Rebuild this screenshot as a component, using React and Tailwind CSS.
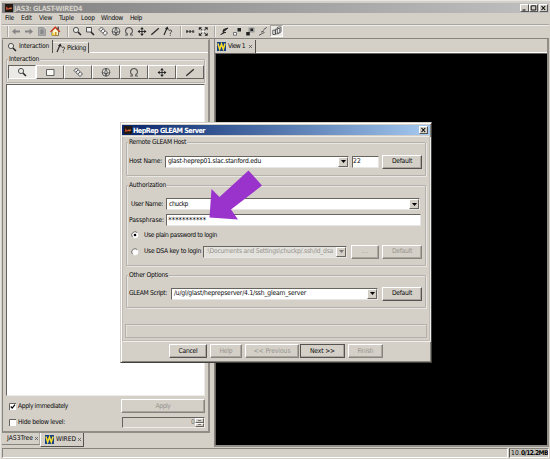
import { useLayoutEffect, useRef } from "react";
import clsx from "clsx";

// Label whose tracking is adjusted so the text spans `w` pixels.
function T({ w, children, className }) {
  const ref = useRef(null);
  useLayoutEffect(() => {
    const el = ref.current;
    el.style.letterSpacing = "0px";
    const natural = el.getBoundingClientRect().width;
    el.style.letterSpacing = `${(w - natural) / el.textContent.length}px`;
  }, [w, children]);
  return (
    <span ref={ref} className={clsx("inline-block shrink-0 whitespace-pre", className)}>
      {children}
    </span>
  );
}

const GLYPHS = {
  back: <path d="M2 6.5 5.5 3.5V5.6H10V7.4H5.5V9.5Z" fill="#858585" />,
  forward: <path d="M10 6.5 6.5 3.5V5.6H2V7.4H6.5V9.5Z" fill="#858585" />,
  reload: (
    <>
      <path d="M2.5 2.5H7.5L9.5 4.5V10.5H2.5Z" fill="#aaa" stroke="#999" />
      <path d="M4 6h4M4 8h4M6 4v5" stroke="#777" strokeWidth=".8" />
    </>
  ),
  home: (
    <>
      <path d="M3 6V10.5H9.5V6L6.3 3Z" fill="#fff8d0" stroke="#5c4a20" strokeWidth=".7" />
      <path d="M1.5 6.8 6.3 2 11 6.8" fill="none" stroke="#d42a10" strokeWidth="1.2" />
      <path d="M8.5 1.8h1.3v3H8.5z" fill="#333" />
      <path d="M5.8 7h1.8v3.5H5.8z" fill="#d79a20" />
      <path d="M3 8h1.8v2.6H3z" fill="#f0c838" />
    </>
  ),
  zoom: (
    <>
      <circle cx="5" cy="5" r="2.6" fill="#e9e9e5" stroke="#444" strokeWidth=".9" />
      <path d="m7 7 3 3" stroke="#222" strokeWidth="1.5" />
    </>
  ),
  zoomBox: (
    <>
      <path d="M2.5 2.5h5v4.5h-5z" fill="#eee" stroke="#444" strokeWidth=".9" />
      <path d="m7 7 3 3" stroke="#222" strokeWidth="1.5" />
    </>
  ),
  box: <path d="M2.5 3.5h7.5v6H2.5z" fill="#f8f8f4" stroke="#555" strokeWidth=".9" />,
  ruler: (
    <>
      <path d="M4.5 2 10.5 8 8 10.5 2 4.5Z" fill="#eee" stroke="#444" strokeWidth=".9" />
      <path d="m6 4-2 2M8 6 6 8" stroke="#333" strokeWidth=".8" />
    </>
  ),
  globe: (
    <g fill="none" stroke="#444" strokeWidth=".8">
      <circle cx="6" cy="6.3" r="3.9" fill="#e2e2dd" />
      <path d="M2 6.5q4 2.2 8 0M6 2.3q-2.5 4 0 8q2.4-4 0-8" />
    </g>
  ),
  rotate: (
    <path d="M2 10h2.3V8.8Q2.3 7.8 2.5 5.6Q3 2.5 6 2.5T9.5 5.6Q9.7 7.8 7.7 8.8V10H10" fill="none" stroke="#555" strokeWidth="1.1" />
  ),
  move: (
    <>
      <path d="M6 3v7M2.5 6.5h7" stroke="#222" strokeWidth=".9" />
      <path d="M6 2 7.8 4.3H4.2ZM6 11 4.2 8.7h3.6ZM1.5 6.5 3.8 4.7v3.6ZM10.5 6.5 8.2 4.7v3.6Z" fill="#222" />
    </>
  ),
  line: <path d="M2.3 9.8 9.8 3.2" stroke="#333" strokeWidth="1.4" />,
  pick: (
    <>
      <path d="M2 10 5 3M3.5 4 5.3 2.5 6.3 4.8" fill="none" stroke="#222" strokeWidth="1.1" />
      <path d="M7 6q0-1 1.3-1t1.3 1.2q0 1-1.3 1.8v.8M8.3 9.7v1" fill="none" stroke="#333" strokeWidth=".9" />
    </>
  ),
  dots: (
    <>
      <path d="M2 6.5h8" stroke="#555" strokeWidth=".8" />
      <path d="M2 5.3h2v2.4H2zM5.1 5.3h1.9v2.4H5.1zM8.2 5.3h2v2.4h-2z" fill="#444" />
    </>
  ),
  expand: (
    <>
      <path d="m3 3 6.5 7M9.5 3 3 10" stroke="#333" strokeWidth="1.1" />
      <path d="M1.8 2.2h3.2L1.8 5.2zM10.7 2.2H7.5l3.2 3zM1.8 10.8H5l-3.2-3zM10.7 10.8H7.5l3.2-3z" fill="#222" />
      <path d="M5 5.3h2.4v2.4H5z" fill="#fff" />
    </>
  ),
  stroke: <path d="M2.5 10 5 7.500H8M5.500 4.500 10 3 7.500 5.200 5 7Z" fill="#222" stroke="#222" strokeWidth=".9" />,
  pair: (
    <>
      <path d="M6.5 3h3.5v3.5H6.500z" fill="#222" />
      <path d="M2.5 7.5h3v2.7h-3z" fill="#fff" stroke="#555" strokeWidth=".8" />
    </>
  ),
  pair2: (
    <>
      <path d="M4.5 2.5h6v5h-6z" fill="#999" />
      <path d="M6.5 3.5H9v2.6H6.5zM2.2 7h3.6v3.6H2.2z" fill="#222" />
    </>
  ),
  steps: <path d="M2 10.3 4.5 9M4 7.2l3-1.4M4.5 8.7l3-1.2M6.5 4.8 9.7 2.4" fill="none" stroke="#555" strokeWidth="1" />,
  boxes: (
    <g fill="#eee" stroke="#444" strokeWidth=".8">
      <path d="M5.5 3.2 7 2h3v4.5L8.5 8" />
      <path d="M4.3 4.3h3v4.5h-3zM1.8 5.2h2.6v4.3H1.8z" />
      <path d="M6.3 3.5h2.5V8H6.3z" />
    </g>
  ),
};

const Icon = ({ name, className }) => (
  <svg viewBox="0 0 12 12" className={clsx("size-3 shrink-0", className)}>
    {GLYPHS[name]}
  </svg>
);

const WLogo = () => (
  <svg viewBox="0 0 9 9" className="size-[9px] shrink-0">
    <path d="M0 0h9v9H0z" fill="#123f86" />
    <path d="m.9 1.6 1.8 5.6L4.5 2l1.8 5.2 1.8-5.6" fill="none" stroke="#ffdf28" strokeWidth="1.5" />
  </svg>
);

const AppLogo = () => (
  <svg viewBox="0 0 8 8" className="h-2 w-2 shrink-0">
    <path d="M0 0h8v8H0z" fill="#241813" />
    <path d="M1 2.5 3.2 4 6.8 3.4v1.5L3 5.4 1 6Z" fill="#b5432c" />
    <path d="M4 4.2h3" stroke="#e4a64c" strokeWidth=".6" />
  </svg>
);

const CloseX = ({ className }) => (
  <svg viewBox="0 0 5 5" className={clsx("size-[5px] shrink-0", className)}>
    <path d="m1 1 3 3M4 1 1 4" stroke="currentColor" strokeWidth=".8" />
  </svg>
);

function WinButton({ kind }) {
  return (
    <span className="flex h-2 w-[9px] items-center justify-center border border-t-white border-r-[#555] border-b-[#555] border-l-white bg-[#d4d0c8]">
      <svg viewBox="0 0 7 6" className="h-1.5 w-[7px] shrink-0" fill="none" stroke="#000">
        {kind === "min" && <path d="M1.5 5h3" />}
        {kind === "max" && <path d="M1.2.8h4.6M1.2 1v4h4.6V1" strokeWidth=".9" />}
        {kind === "close" && <path d="m1.5 1 3.7 4M5.200 1 1.500 5" strokeWidth="1.1" />}
      </svg>
    </span>
  );
}

const Sep = ({ className }) => (
  <span className={clsx("h-[11px] w-0.5 shrink-0 border-l border-l-[#aaa6a0] bg-[#f2f0ec]", className)} />
);

function Button({ children, w, disabled, className }) {
  return (
    <button
      className={clsx(
        "flex shrink-0 items-center justify-center border border-t-white border-l-white bg-[#d4d0c8] p-0 shadow-[inset_-1px_-1px_0_#aaa69f]",
        disabled ? "border-r-[#87847e] border-b-[#87847e] text-[#96938d]" : "border-r-[#55534f] border-b-[#55534f]",
        className,
      )}
    >
      <T w={w}>{children}</T>
    </button>
  );
}

function Combo({ children, w, disabled, className }) {
  return (
    <div
      className={clsx(
        "flex h-3 shrink-0 items-center border border-t-[#68655f] border-r-[#e8e6e2] border-b-[#e8e6e2] border-l-[#68655f] pl-0.5",
        disabled ? "bg-[#e4e2dd] text-[#96938d]" : "bg-white",
        className,
      )}
    >
      <T w={w}>{children}</T>
      <span className="ml-auto flex h-2.5 w-2.5 shrink-0 items-center justify-center border border-t-white border-r-[#68655f] border-b-[#68655f] border-l-white bg-[#d4d0c8]">
        <svg viewBox="0 0 5 3" className="h-[3px] w-[5px]" fill={disabled ? "#777" : "#000"}>
          <path d="M0 0h5L2.5 3Z" />
        </svg>
      </span>
    </div>
  );
}

function Group({ title, w, className, children }) {
  return (
    <section className={clsx("relative rounded-[1px] border border-[#b5b1aa] shadow-[inset_1px_1px_0_#e9e7e3,1px_1px_0_#e9e7e3]", className)}>
      <div className="absolute -top-[6px] left-px flex h-2.5 items-center bg-[#d4d0c8] px-px">
        <T w={w}>{title}</T>
      </div>
      {children}
    </section>
  );
}

const Radio = ({ checked }) => (
  <svg viewBox="0 0 8 8" className="size-2 shrink-0">
    <circle cx="4" cy="4" r="3.2" fill="#fff" />
    <path d="M1.7 6.3A3.2 3.2 0 0 1 6.3 1.7" fill="none" stroke="#66635e" strokeWidth=".9" />
    {checked && <circle cx="4" cy="4" r="1.3" fill="#000" />}
  </svg>
);

const Check = ({ checked }) => (
  <svg viewBox="0 0 7 7" className="size-[7px] shrink-0">
    <path d="M0 0h7v7H0z" fill="#fff" />
    <path d="M.5 7V.5H7" fill="none" stroke="#66635e" />
    {checked && <path d="m1.8 3.5 1.4 1.6 2.8-3.4" fill="none" stroke="#000" strokeWidth="1.2" />}
  </svg>
);

const MENU = [
  ["File", 9, "w-4"],
  ["Edit", 11, "w-[18px]"],
  ["View", 13, "w-5"],
  ["Tuple", 15, "w-[22px]"],
  ["Loop", 14, "w-5"],
  ["Window", 22, "w-[29px]"],
  ["Help", 12, "w-5"],
];

function Dialog() {
  return (
    <div className="absolute top-[121px] left-[119px] flex h-[241px] w-[312px] flex-col border border-t-[#d4d0c8] border-r-[#404040] border-b-[#404040] border-l-[#d4d0c8] bg-[#d4d0c8] p-px shadow-[inset_1px_1px_0_#fff,inset_-1px_-1px_0_#87847e]">
      <header className="mt-px flex h-[10px] shrink-0 items-center bg-linear-to-r from-[#0a246a] to-[#a6caf0] pr-0.5 pl-0.5 font-bold text-white">
        <AppLogo />
        <T w={72} className="ml-px text-[7.2px]">HepRep GLEAM Server</T>
        <span className="ml-auto">
          <WinButton kind="close" />
        </span>
      </header>
      <div className="mt-px flex h-[205px] shrink-0 flex-col border border-[#c0bcb5] border-t-[#eeece8] px-[3px] shadow-[1px_1px_0_#f1efeb]">
        <Group title="Remote GLEAM Host" w={57} className="mt-[5px] h-[34px] shrink-0">
          <div className="mt-3 flex h-[13px] items-center pr-[3px] pl-0.5">
            <T w={33}>Host Name:</T>
            <Combo w={93} className="ml-[3px] w-[184px]">glast-heprep01.slac.stanford.edu</Combo>
            <div className="ml-[3px] flex h-3 w-[27px] items-center border border-t-[#68655f] border-r-[#e8e6e2] border-b-[#e8e6e2] border-l-[#68655f] bg-white">
              <T w={8}>22</T>
            </div>
            <Button w={20} className="ml-auto h-[14px] w-10">Default</Button>
          </div>
        </Group>
        <Group title="Authorization" w={37} className="mt-[9px] h-[81px] shrink-0">
          <div className="mt-3 flex h-3 items-center pl-[4px]">
            <T w={32}>User Name:</T>
            <Combo w={19} className="ml-[3px] w-[254px]">chuckp</Combo>
          </div>
          <div className="mt-1 flex h-3 items-center pl-0.5">
            <T w={35}>Passphrase:</T>
            <div className="ml-0.5 flex h-3 w-[255px] items-center border border-t-[#68655f] border-r-[#e8e6e2] border-b-[#e8e6e2] border-l-[#68655f] bg-white pl-px">
              <T w={38} className="mt-[3px] text-[8.5px]">***********</T>
            </div>
          </div>
          <div className="mt-[3px] flex h-3 items-center pl-[4px]">
            <Radio checked />
            <T w={73} className="ml-[5px]">Use plain password to login</T>
          </div>
          <div className="mt-1 flex h-[13px] items-center pr-[3px] pl-[4px]">
            <Radio />
            <T w={57} className="ml-[5px]">Use DSA key to login</T>
            <Combo disabled w={127} className="ml-0.5 w-[144px]">:\Documents and Settings\chuckp/.ssh/id_dsa</Combo>
            <Button disabled w={7} className="ml-1 h-[14px] w-7">...</Button>
            <Button disabled w={20} className="ml-auto h-[14px] w-10">Default</Button>
          </div>
        </Group>
        <Group title="Other Options" w={39} className="mt-[9px] h-[33px] shrink-0">
          <div className="mt-[11px] flex h-[13px] items-center pr-[3px] pl-0.5">
            <T w={38}>GLEAM Script:</T>
            <Combo w={132} className="ml-1 w-[207px]">/u/gl/glast/heprepserver/4.1/ssh_gleam_server</Combo>
            <Button w={20} className="ml-auto h-[14px] w-10">Default</Button>
          </div>
        </Group>
        <div className="-mx-px mt-[16px] h-[14px] shrink-0 border border-[#b5b1aa] shadow-[inset_1px_1px_0_#e4e2dd]" />
      </div>
      <footer className="mt-[3px] flex h-[14px] shrink-0 gap-[3px] pl-[47px]">
        <Button w={19} className="w-[38px]">Cancel</Button>
        <Button w={13} disabled className="w-[32px]">Help</Button>
        <Button w={37} disabled className="w-[54px]">{"<< Previous"}</Button>
        <Button w={25} className="-ml-0.5 w-[45px] outline outline-[#55534f] -outline-offset-1">{"Next >>"}</Button>
        <Button w={16} disabled className="w-[35px]">Finish</Button>
      </footer>
    </div>
  );
}

export default function App() {
  return (
    <div className="relative flex h-[459px] w-[550px] flex-col overflow-hidden border-t border-l border-[#e8e6e2] bg-[#d4d0c8] pt-0.5 pl-px font-['DejaVu_Sans_Condensed','DejaVu_Sans',sans-serif] text-[6.7px] leading-[9px] text-[#080808] [font-stretch:condensed] [text-rendering:geometricPrecision]">
      <header className="flex h-[10px] w-[547px] shrink-0 items-center bg-linear-to-r from-[#808080] to-[#c0c0c0] pr-px pl-[3px] font-bold text-[#d4d0c8]">
        <AppLogo />
        <T w={68} className="ml-px text-[7.2px]">JAS3: GLAST-WIRED4</T>
        <span className="ml-auto flex">
          <WinButton kind="min" />
          <WinButton kind="max" />
          <span className="ml-px">
            <WinButton kind="close" />
          </span>
        </span>
      </header>
      <nav className="flex h-[11px] shrink-0 items-center pl-[3px]">
        {MENU.map(([label, w, box]) => (
          <span key={label} className={clsx("flex shrink-0", box)}>
            <T w={w}>{label}</T>
          </span>
        ))}
      </nav>
      <div className="flex h-[15px] w-[547px] shrink-0 items-center gap-px border-t border-b border-t-[#aaa6a0] border-b-[#87847e] pb-px shadow-[inset_0_1px_0_#eeece8]">
        <Sep className="ml-[5px]" />
        {["back", "forward", "reload", "home"].map((n) => (
          <Icon key={n} name={n} />
        ))}
        <Sep className="mr-[1px] ml-[5px]" />
        {["zoom", "zoomBox", "ruler", "globe", "rotate", "move", "line", "pick"].map((n) => (
          <Icon key={n} name={n} />
        ))}
        <Sep className="mr-px ml-[5px]" />
        <Icon name="dots" />
        <Icon name="expand" />
        <Sep className="mr-px ml-[4px]" />
        {["stroke", "pair", "pair2", "steps"].map((n) => (
          <Icon key={n} name={n} />
        ))}
        <span className="flex h-3 w-[13px] items-center justify-center border border-t-[#aaa6a0] border-r-white border-b-white border-l-[#aaa6a0] bg-[#eceae6]">
          <Icon name="boxes" />
        </span>
      </div>
      <main className="flex h-[408px] w-[547px] shrink-0">
        <div className="flex w-[208px] shrink-0 flex-col">
          <div className="flex h-[394px] flex-col border-t border-r-2 border-b-2 border-l border-t-[#d4d0c8] border-r-[#918e88] border-b-[#918e88] border-l-[#87847e]">
            <div className="flex h-[13px] shrink-0 items-end">
              <div className="flex h-[13px] w-[50px] items-center border-r border-r-[#55534f] pl-[3px]">
                <Icon name="zoom" />
                <T w={30} className="ml-px">Interaction</T>
              </div>
              <div className="flex h-[11px] w-9 items-center border-t border-r border-t-[#eeece8] border-r-[#55534f] pl-0.5">
                <Icon name="pick" />
                <T w={19}>Picking</T>
              </div>
              <div className="ml-px h-px flex-1 bg-white" />
            </div>
            <Group title="Interaction" w={30} className="mt-[6px] mr-[3px] ml-[3px] h-[24px] shrink-0">
              <div className="mt-[5px] flex h-[14px] pl-px">
                {["zoom", "box", "ruler", "globe", "rotate", "move", "line"].map((n, i) => (
                  <span
                    key={n}
                    className={clsx(
                      "flex flex-1 items-center justify-center border",
                      i === 0
                        ? "border-t-[#66635e] border-r-white border-b-white border-l-[#66635e] bg-[#eceae6]"
                        : "border-t-white border-r-[#66635e] border-b-[#66635e] border-l-white",
                    )}
                  >
                    <Icon name={n} />
                  </span>
                ))}
              </div>
            </Group>
            <div className="mt-[1px] ml-[3px] h-[312px] w-[199px] shrink-0 border border-t-[#66635e] border-r-[#eeece8] border-b-[#eeece8] border-l-[#66635e] bg-white" />
            <div className="mt-[3px] flex h-[14px] shrink-0 items-center pl-[6px]">
              <Check checked />
              <T w={50} className="ml-0.5">Apply immediately</T>
              <Button w={15} disabled className="mr-[3px] ml-auto h-[14px] w-[84px]">Apply</Button>
            </div>
            <div className="mt-[3px] flex h-3 shrink-0 items-center pl-[6px]">
              <Check />
              <T w={47} className="ml-0.5">Hide below level:</T>
              <div className="mr-[3px] ml-auto flex h-[11px] w-[83px] items-center justify-end border border-t-[#66635e] border-r-[#eeece8] border-b-[#eeece8] border-l-[#66635e] text-[#77746e]">
                <T w={4}>0</T>
                <span className="flex h-[9px] w-[9px] flex-col">
                  <span className="flex h-[5px] items-center justify-center border border-t-white border-r-[#66635e] border-b-[#66635e] border-l-white">
                    <span className="h-px w-[3px] bg-[#77746e]" />
                  </span>
                  <span className="flex h-[4px] items-center justify-center border border-t-white border-r-[#66635e] border-b-[#66635e] border-l-white">
                    <span className="h-px w-[3px] bg-[#77746e]" />
                  </span>
                </span>
              </div>
            </div>
          </div>
          <div className="flex h-[14px] items-start">
            <div className="flex h-3 w-[38px] items-center border-r border-b border-r-[#aaa6a0] border-b-[#87847e] pl-[5px]">
              <T w={26}>JAS3Tree</T>
              <CloseX className="ml-px text-[#555]" />
            </div>
            <div className="flex h-[14px] w-[44px] items-center border-r border-b border-l border-r-[#55534f] border-b-[#55534f] border-l-white pl-1">
              <WLogo />
              <T w={20} className="ml-0.5">WIRED</T>
              <CloseX className="ml-px text-[#555]" />
            </div>
          </div>
        </div>
        <div className="ml-1 flex flex-1 flex-col border-r-2 border-b-2 border-l border-r-[#918e88] border-b-[#918e88] border-l-[#87847e]">
          <div className="flex h-[14px] shrink-0 items-end">
            <div className="flex h-[13px] w-[41px] items-center border-r border-r-[#55534f] pl-0.5">
              <WLogo />
              <T w={17} className="ml-0.5">View 1</T>
              <CloseX className="ml-[3px] text-[#555]" />
            </div>
            <div className="h-px flex-1 bg-white" />
          </div>
          <div className="flex-1 border-t border-l border-[#66635e] bg-black" />
        </div>
      </main>
      <footer className="mt-px flex h-[10px] w-[547px] shrink-0 justify-between">
        <div className="w-[506px] border border-t-[#87847e] border-r-white border-b-white border-l-[#87847e]" />
        <div className="flex w-10 items-center overflow-hidden border border-t-[#87847e] border-r-white border-b-white border-l-[#55534f] bg-[#c4c1ba] pl-px">
          <T w={10}>10.</T>
          <T w={27} className="font-bold">0/12.2MB</T>
        </div>
      </footer>
      <Dialog />
      <svg viewBox="0 0 54 50" className="absolute top-[169px] left-[208px] h-[50px] w-[54px]">
        <path d="M.5 47.5 2.5 19 10.5 27 39.5 .5 53 15.500 22 39.5 29 49.5Z" fill="#9933cc" />
      </svg>
    </div>
  );
}
